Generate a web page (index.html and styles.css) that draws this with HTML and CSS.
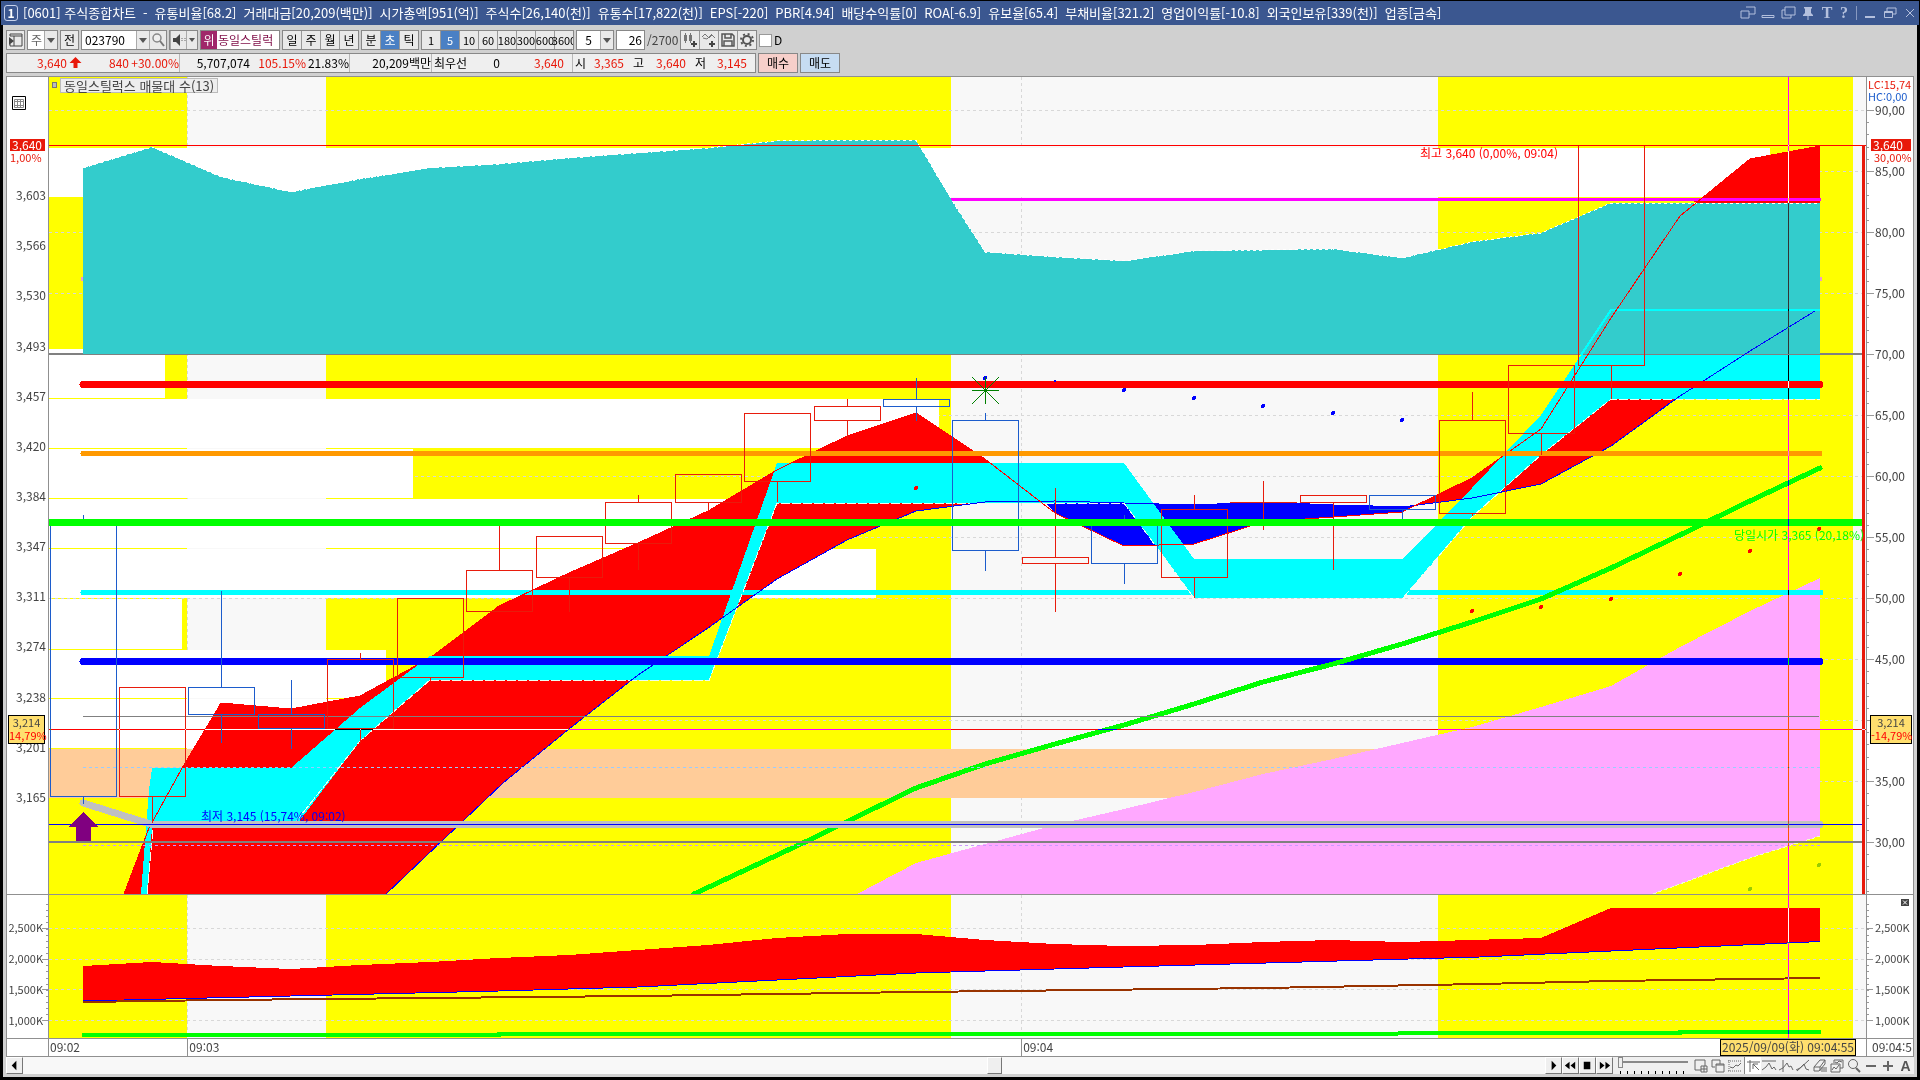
FILE: index.html
```html
<!DOCTYPE html>
<html lang="ko">
<head>
<meta charset="utf-8">
<title>[0601] 주식종합차트</title>
<link rel="stylesheet" href="styles.css">
</head>
<body>
<div class="window">
<header class="title">
  <span class="badge">1</span>
  <h1><span>[0601] 주식종합차트</span><span>-</span><span>유통비율[68.2]</span><span>거래대금[20,209(백만)]</span><span>시가총액[951(억)]</span><span>주식수[26,140(천)]</span><span>유통수[17,822(천)]</span><span>EPS[-220]</span><span>PBR[4.94]</span><span>배당수익률[0]</span><span>ROA[-6.9]</span><span>유보율[65.4]</span><span>부채비율[321.2]</span><span>영업이익률[-10.8]</span><span>외국인보유[339(천)]</span><span>업종[금속]</span></h1>
  <div class="wbtns">
    <button aria-label="창 분리"><svg viewBox="0 0 16 16"><path d="M6 2h9v7H9M1 6h8v7H1z"/></svg></button>
    <button aria-label="숨기기"><svg viewBox="0 0 16 16"><path d="M2 10.500h12v2H2z"/></svg></button>
    <button aria-label="복사"><svg viewBox="0 0 16 16"><path d="M5 2h10v8H5zM5 5H2v8h9v-3"/></svg></button>
    <button aria-label="고정"><svg viewBox="0 0 16 16"><path class="f" d="M4 2h8v1l-1 1v4l2 2v1H3v-1l2-2V4L4 3zM7.500 11h1v4h-1z"/></svg></button>
    <button class="ch">T</button>
    <button class="ch" aria-label="도움말">?</button>
    <i></i>
    <button aria-label="최소화"><svg viewBox="0 0 16 16"><path class="f" d="M3 11h10v2H3z"/></svg></button>
    <button aria-label="복원"><svg viewBox="0 0 16 16"><path d="M5 6V3h9v6h-3M2.500 6.500h8v6h-8zM3 7.500h7"/></svg></button>
    <button aria-label="닫기"><svg viewBox="0 0 16 16"><path d="M4 4l8 8M12 4l-8 8"/></svg></button>
  </div>
</header>
<main class="frame">
<div class="tools">
  <button class="tb" aria-label="목록"><svg viewBox="0 0 16 16"><path d="M2 4V2h12v12H2v-2M2 4h12M6 4v10" stroke="#444" fill="none"/><path d="M1 5l5 4-5 4z" fill="#444"/></svg></button>
  <span class="combo w31"><input value="주" aria-label="주기 유형" class="dim"><button aria-label="열기" class="dd"></button></span>
  <button class="tb">전</button>
  <span class="combo w86"><input value="023790" aria-label="종목코드" class="code"><button aria-label="열기" class="dd"></button><button class="ic" aria-label="검색"><svg viewBox="0 0 16 16"><circle cx="7" cy="6" r="4" fill="#eee" stroke="#888" stroke-width="1.500"/><path d="M10 9l4 5" stroke="#777" stroke-width="2"/></svg></button></span>
  <span class="combo w29"><button class="ic" aria-label="소리"><svg viewBox="0 0 16 16"><path d="M2 6h3l4-4v12L5 10H2z" fill="#444"/><path d="M11 6v4M14 6v4" stroke="#666" stroke-dasharray="1 1"/></svg></button><button aria-label="열기" class="dd nar"></button></span>
  <span class="combo w80"><b class="up">위</b><input value="동일스틸럭" aria-label="종목명" class="name"></span>
  <span class="seg s4"><button>일</button><button>주</button><button>월</button><button>년</button></span>
  <span class="seg s3"><button>분</button><button class="on">초</button><button>틱</button></span>
  <span class="seg s8"><button>1</button><button class="on">5</button><button>10</button><button>60</button><button>180</button><button>300</button><button>600</button><button>3600</button></span>
  <span class="combo w38"><input value="5" aria-label="주기" class="mid"><button aria-label="열기" class="dd"></button></span>
  <span class="combo w29"><input value="26" aria-label="표시 개수" class="rt"></span>
  <span class="tot">/2700</span>
  <span class="seg s4">
    <button aria-label="봉 추가"><svg viewBox="0 0 16 16"><path d="M2 3h3v6H2zM3 1h1v10H3zM7 3h3v6H7zM8 1h1v10H8z" fill="#777"/><path d="M9 12h6M12 9v6" stroke="#444" stroke-width="2"/></svg></button>
    <button aria-label="지표 추가"><svg viewBox="0 0 16 16"><path d="M1 5l3-3 4 4 3-3 3 3M2 6l4 1 5-5" stroke="#777" fill="none"/><path d="M8 12h6M11 9v6" stroke="#444" stroke-width="2"/></svg></button>
    <button aria-label="저장"><svg viewBox="0 0 16 16"><path d="M2 2h10l2 2v10H2zM5 2v4h6V2M4 14V9h8v5" stroke="#555" fill="none" stroke-width="1.500"/></svg></button>
    <button aria-label="설정"><svg viewBox="0 0 16 16"><circle cx="8" cy="8" r="4" fill="none" stroke="#555" stroke-width="2"/><circle cx="8" cy="8" r="6" fill="none" stroke="#555" stroke-width="2" stroke-dasharray="2 2.700"/></svg></button>
  </span>
  <label class="chk"><input type="checkbox">D</label>
</div>
<div class="quote">
  <div class="qbox">
    <span class="r">3,640</span><svg class="arr" viewBox="0 0 12 12"><path d="M6 0l6 6H8v5H4V6H0z"/></svg><span class="r">840</span><span class="r">+30.00%</span>
    <span class="s k">5,707,074</span><span class="r">105.15%</span><span class="k">21.83%</span>
    <span class="s k">20,209백만</span>
    <span class="s k l">최우선</span><span class="k">0</span><span class="r">3,640</span>
    <span></span><span class="s k l">시</span><span class="r">3,365</span><span class="k">고</span><span class="r">3,640</span><span class="k">저</span><span class="r">3,145</span>
  </div>
  <button class="buy">매수</button><button class="sell">매도</button>
</div>

<section class="chart">
  <div class="axis left">
    <svg class="cal" viewBox="0 0 14 14"><path d="M.5.500h13v13H.5z" fill="#fff" stroke="#000"/><path d="M2.500 3.500h9v8h-9zM2.500 5.500h9M2.500 9.500h9M5.500 3.500v8M8.500 3.500v8" fill="none" stroke="#888"/></svg>
    <ol><li>3,603</li><li>3,566</li><li>3,530</li><li>3,493</li><li>3,457</li><li>3,420</li><li>3,384</li><li>3,347</li><li>3,311</li><li>3,274</li><li>3,238</li><li>3,201</li><li>3,165</li></ol>
    <div class="now"><b>3,640</b><span>1,00%</span></div>
    <div class="cur"><span>3,214</span><em>14,79%</em></div>
  </div>
  <div class="plot">
  <svg viewBox="49 77 1817 817" preserveAspectRatio="none">
    <rect x="49" y="77" width="1817" height="817" fill="#f8f8f8"/>
    <path fill="#ff0" d="M49 77h138v817H49zM326 77h625v817H326zM1438 77h415v817h-415z"/>
    <path class="grid" d="M49 110.500H1864M49 171.500H1864M49 232.500H1864M49 293.500H1864M49 354.500H1864M49 415.500H1864M49 476.500H1864M49 537.500H1864M49 598.500H1864M49 659.500H1864M49 720.500H1864M49 781.500H1864M49 842.500H1864M187.500 77V894M1021.500 77V894"/>
    <path fill="#fff" d="M49 148H1770v49H49zM49 349H165v49H49zM49 399H939v49H49zM49 449H413v49H49zM49 499H760v49H49zM49 549H876v49H49zM49 599H182v50H49zM49 650H386v48H49zM49 699H450v49H49z"/>
    <path fill="#fc9" d="M49 749H1460v49H49z"/>
    <path fill="#ffa8ff" d="M857 894L916 863L985 844L1055 825L1124 809L1194 792L1263 774L1333 759L1402 743L1472 727L1541 707L1611 686L1680 647L1750 611L1820 578V836L1750 858L1653 894z"/>
    <path stroke="#efc" fill="none" stroke-dasharray="4 2" d="M1653 894L1750 858L1820 836"/>
    <path fill="#f00" d="M124 894L149 828L181 770L221 703L291 709L360 696L430 658L499 606L569 573L638 543L708 511L777 470L847 436L916 413L985 459L1045 502L985 502L916 511L847 540L777 579L708 628L638 675L569 729L503 783L386 894z"/>
    <path fill="#00f" d="M1045 502L1055 513L1124 546L1194 544L1263 522L1333 517L1402 512L1413 506L1333 505L1263 502L1194 505L1124 503z"/>
    <path fill="#f00" d="M1413 506L1472 478L1541 429L1611 318L1680 216L1750 159L1820 146V311L1750 351L1680 396L1611 446L1541 484L1472 498z"/>
    <path class="cy5" d="M83 592.500H1821"/>
    <path fill="#0ff" d="M141 894L149 790L152 768H291L360 708L430 656H709L777 463H1124L1194 559H1403L1472 488L1541 415L1581 355L1611 309H1820V399H1611L1541 455L1472 517L1403 598H1194L1124 503H777L709 680H430L360 741L294 828L152 828L147 894z"/>
    <path class="wd" d="M430 680.500H709L777 503H1124L1194 598M1403 598L1472 517L1541 455L1611 399H1820M430 680L360 741L294 824M147 894L153 828"/>
    <path class="blue" d="M386 894L503 783L569 729L638 675L708 628L777 579L847 540L916 511L985 502L1055 501L1124 503L1194 505L1263 502L1333 505L1402 507L1472 498L1541 484L1611 446L1680 396"/>
    <path stroke="#f0f" stroke-width="3" d="M83 199.500H1821"/>
    <path fill="#3cc" d="M83 168L152 147L221 177L291 192L360 179L430 168L499 164L569 158L638 153L708 148L777 141L847 140L916 140L951 199L985 252L1055 257L1124 261L1194 251L1263 250L1333 249L1402 258L1472 242L1541 233L1611 203H1820V354H83z"/>
    <path stroke="#f00" d="M1694 201.500H1820"/>
    <path class="wd2" d="M83 168L152 147L221 177L291 192L360 179L430 168L499 164L569 158L638 153L708 148L777 141L847 140L916 140L951 199L985 252L1055 257L1124 261L1194 251L1263 250L1333 249L1402 258L1472 242L1541 233L1611 203H1820"/>
    <path stroke="#808080" d="M49 354.500H1864"/><path stroke="#808080" stroke-width="2" d="M49 354H83M1820 354H1864"/>
    <path fill="none" stroke="#0ff" stroke-width="2" d="M1581 355L1611 310H1820"/>
    <path class="redl" d="M124 894L149 828L181 770L221 703L291 709L360 696L430 658L499 606L569 573L638 543L708 511L777 470L847 436L916 413L985 459L1055 513L1124 546L1194 544L1263 522L1333 517L1402 512L1472 478L1541 429L1611 318L1680 216L1750 159L1820 146"/>
    <path class="blue" d="M1660 410L1680 396L1750 351L1815 311"/>
    <path class="cy5" d="M1420 592.500H1821"/>
    <path class="th" stroke="#f00" stroke-width="7" d="M83 384.500H1820"/>
    <path class="th" stroke="#f90" stroke-width="5" d="M83 453.500H1820"/>
    <path class="th" stroke="#00f" stroke-width="7" d="M83 661.500H1820"/>
    <path stroke="#0ff" stroke-width="2" d="M430 657H708"/>
    <path class="th" stroke="#0f0" stroke-width="5" d="M694 894L803 843L840 825L916 788L985 764L1055 744L1124 725L1194 704L1263 682L1333 664L1402 644L1472 622L1541 599L1611 568L1680 535L1750 501L1820 468"/>
    <path stroke="#808080" d="M83 716.500H1819"/>
    <path stroke="#9cf" stroke-dasharray="3 3" d="M83 767.500H1820"/>
    <path stroke="#c9f" stroke-dasharray="3 3" d="M83 845.500H1820"/>
    <path class="th" stroke="#c0c0c0" stroke-width="7" d="M83 803L152 824.500H1820"/>
    <path stroke="#00f" d="M49 824.500H1864"/>
    <path stroke="#808080" stroke-width="2" d="M49 842H1864"/>
    <g class="cb"><path d="M50.500 522V796.500H116.500V522M83.500 515V522M83.500 797V804M188.500 687.500h66v27h-66zM221.500 591V687M221.500 715V743M258.500 714.500h66v14h-66zM291.500 680V714M291.500 729V749M883.500 399.500h66v7h-66zM916.500 378V399M916.500 407V421M952.500 420.500h66v130h-66zM985.500 413V420M985.500 551V571M1091.500 519.500h66v44h-66zM1124.500 515V519M1124.500 564V584M1369.500 495.500h66v14h-66zM1402.500 510V522"/></g>
    <g class="cr"><path d="M119.500 687.500h66v109h-66zM152.500 797V823M327.500 659.500h66v69h-66zM360.500 653V659M360.500 729V743M397.500 598.500h66v79h-66zM430.500 678V681M466.500 570.500h66v41h-66zM499.500 525V570M536.500 536.500h66v41h-66zM569.500 578V612M605.500 502.500h66v41h-66zM638.500 495V502M638.500 544V570M675.500 474.500h66v28h-66zM708.500 503V510M744.500 413.500h66v68h-66zM777.500 482V502M814.500 406.500h66v14h-66zM847.500 399V406M847.500 421V440M1022.500 557.500h66v6h-66zM1055.500 488V557M1055.500 564V612M1161.500 509.500h66v68h-66zM1194.500 495V509M1194.500 578V598M1230 502.500h67M1263.500 481V530M1300.500 495.500h66v7h-66zM1333.500 503V570M1439.500 420.500h66v93h-66zM1472.500 392V420M1472.500 514V516M1508.500 365.500h66v68h-66zM1541.500 434V455M1578.500 145.500h66v220h-66zM1611.500 366V399"/></g>
    <path stroke="#0f0" stroke-width="7" d="M49 522.500H1864"/>
    <path stroke="#f00" d="M49 145.500H1866"/>
    <path stroke="#e8190a" stroke-width="3" d="M1863.500 145V894"/>
    <g fill="#00f"><circle cx="985" cy="378" r="2"/><circle cx="1055" cy="381" r="1"/><circle cx="1124" cy="390" r="2"/><circle cx="1194" cy="398" r="2"/><circle cx="1263" cy="406" r="2"/><circle cx="1333" cy="413" r="2"/><circle cx="1402" cy="420" r="2"/></g>
    <g fill="#f00"><circle cx="916" cy="488" r="2"/><circle cx="1472" cy="611" r="2"/><circle cx="1541" cy="607" r="2"/><circle cx="1611" cy="599" r="2"/><circle cx="1680" cy="574" r="2"/><circle cx="1750" cy="551" r="2"/><circle cx="1819" cy="529" r="2"/></g>
    <g fill="#9c0"><circle cx="1819" cy="865" r="2"/><circle cx="1750" cy="889" r="2"/></g>
    <path fill="#e9c" d="M81 277h2v4h-2zM1820 277h2v4h-2z"/>
    <path stroke="#008000" d="M972 390.500H999M985.500 377V404M972 377L999 404M999 377L972 404"/>
    <path fill="#800080" d="M83.500 812L98 827H91V841H76V827H69z"/>
    <path class="cross" d="M49 729.500H1866M1788.500 77V894"/>
  </svg>
  <i class="sq"></i><h2>동일스틸럭스 매물대 수(13)</h2>
  <span class="note hi">최고 3,640 (0,00%, 09:04)</span>
  <span class="note lo">최저 3,145 (15,74%, 09:02)</span>
  <span class="note op">당일시가 3,365 (20,18%)</span>
  </div>
  <div class="axis right">
    <svg class="ticks" viewBox="0 0 46 817" preserveAspectRatio="none"><path stroke="#999" stroke-width="7" stroke-dasharray="1 60" d="M3.500 33V767"/><path stroke="#999" stroke-width="2" stroke-dasharray="1 11.200" d="M1 33V816"/></svg>
    <ol><li>90,00</li><li>85,00</li><li>80,00</li><li>75,00</li><li>70,00</li><li>65,00</li><li>60,00</li><li>55,00</li><li>50,00</li><li>45,00</li><li>40,00</li><li>35,00</li><li>30,00</li></ol>
    <p class="lc">LC:15,74<br><span>HC:0,00</span></p>
    <div class="now"><b>3,640</b><span>30,00%</span></div>
    <div class="cur"><span>3,214</span><em>-14,79%</em></div>
  </div>

  <div class="axis left vol">
    <svg class="ticks" viewBox="0 0 41 143" preserveAspectRatio="none"><path stroke="#999" d="M35 33.500h6M35 64.500h6M35 94.500h6M35 125.500h6"/><path stroke="#999" stroke-width="2" stroke-dasharray="1 5.130" d="M40 9V132"/></svg>
    <ol><li>2,500K</li><li>2,000K</li><li>1,500K</li><li>1,000K</li></ol>
  </div>
  <div class="plot vol">
  <svg viewBox="49 895 1817 143" preserveAspectRatio="none">
    <rect x="49" y="895" width="1817" height="143" fill="#f8f8f8"/>
    <path fill="#ff0" d="M49 895h138v143H49zM326 895h625v143H326zM1438 895h415v143h-415z"/>
    <path class="grid" d="M49 928.500H1864M49 959.500H1864M49 989.500H1864M49 1020.500H1864M187.500 895V1038M1021.500 895V1038"/>
    <path fill="#f00" d="M83 966L152 962L221 966L291 969L360 965L430 962L499 958L569 955L638 950L708 945L777 938L847 934L916 934L985 940L1055 944L1124 946L1194 945L1263 942L1333 940L1402 942L1472 940L1541 938L1611 908H1820V942L1611 951L1480 957L1124 967L916 973L638 987L499 991L291 996L83 1001z"/>
    <path class="blue" d="M1820 941.500L1611 951L1480 957L1124 967L916 973L638 987L499 991L291 996L83 1001"/>
    <path fill="none" stroke="#930" stroke-width="2" d="M83 1002L221 1000L430 998L638 996L916 992L1263 988L1480 984L1611 981L1820 978"/>
    <path fill="none" stroke="#0f0" stroke-width="4" d="M82 1035H499V1034H1124L1680 1033V1032H1821"/>
    <path class="cross" d="M1788.500 895V1038"/>
  </svg>
  </div>
  <div class="axis right vol">
    <svg class="ticks" viewBox="0 0 46 143" preserveAspectRatio="none"><path stroke="#999" d="M0 33.500h6M0 64.500h6M0 94.500h6M0 125.500h6"/><path stroke="#999" stroke-width="2" stroke-dasharray="1 5.130" d="M1 9V132"/></svg>
    <ol><li>2,500K</li><li>2,000K</li><li>1,500K</li><li>1,000K</li></ol>
    <button class="x" aria-label="패널 닫기"><svg viewBox="0 0 8 7"><path stroke="#fff" d="M2 1.500l4 4M6 1.500l-4 4"/></svg></button>
  </div>
  <div class="axis left time"></div>
  <div class="time"><span class="t1">09:02</span><span class="t2">09:03</span><span class="t3">09:04</span><mark>2025/09/09(화) 09:04:55</mark></div>
  <div class="axis right time tend">09:04:5</div>
</section>

<footer class="bar">
  <button class="pb" aria-label="왼쪽"><svg viewBox="0 0 16 16"><path d="M10 3v10L5 8z"/></svg></button>
  <input class="scroll" type="range" min="0" max="100" value="64" aria-label="스크롤">
  <button class="pb" aria-label="재생"><svg viewBox="0 0 16 16"><path d="M6 3v10l5-5z"/></svg></button>
  <button class="pb" aria-label="뒤로"><svg viewBox="0 0 16 16"><path d="M7 4v8L2 8zM13 4v8L8 8z"/></svg></button>
  <button class="pb" aria-label="정지"><svg viewBox="0 0 16 16"><path d="M4 4h7v8H4z"/></svg></button>
  <button class="pb" aria-label="앞으로"><svg viewBox="0 0 16 16"><path d="M3 4v8l5-4zM9 4v8l5-4z"/></svg></button>
  <input class="speed" type="range" min="0" max="100" value="0" aria-label="속도">
  <div class="ci">
    <button aria-label="추가"><svg viewBox="0 0 16 16"><path d="M8 12H2V2h10v6M8 8h6v6H8zM8 11h6M11 8v6"/></svg></button>
    <button aria-label="겹치기"><svg viewBox="0 0 16 16"><path d="M5 9H2V2h8v4M6 6h8v8H6zM6 7h8"/></svg></button>
    <button aria-label="범위"><svg viewBox="0 0 16 16"><path stroke-dasharray="1 1" d="M2 2v12M1 3h14M1 13h14"/><path d="M3 9l3 1 3-3 2 1 3-3"/></svg></button>
    <button class="act" aria-label="십자선"><svg viewBox="0 0 16 16"><path d="M2 4h13M5 2v12M8 6l6 6M8 11V6h5"/></svg></button>
    <button aria-label="수평선"><svg viewBox="0 0 16 16"><path d="M1 3h14M1 12l4-3 3-4 3 6 2-2 2 3"/></svg></button>
    <button aria-label="수직선"><svg viewBox="0 0 16 16"><path d="M5 2v12M1 12l4-2 4-5 2 4 2-1 2 4"/></svg></button>
    <button aria-label="추세선"><svg viewBox="0 0 16 16"><path d="M2 13L14 2M1 12l4-2 4-4 2 5 3 1"/></svg></button>
    <button aria-label="전체 지우기"><svg viewBox="0 0 16 16"><path d="M2 9l6-7h5l-5 7zM2 9v4h5l6-7V2M8 9v4M10 9v5M12 9v5M14 9v5"/></svg></button>
    <button aria-label="이미지"><svg viewBox="0 0 16 16"><path d="M5 5V2h9v8h-3M2 6h9v8H2zM3 12l2-3 2 2 3-4M6 4l2 1 2-2 3 1"/></svg></button>
    <button aria-label="확대"><svg viewBox="0 0 16 16"><circle cx="7" cy="6" r="4.500"/><path stroke-width="2" d="M10 10l4 4"/></svg></button>
    <button aria-label="축소"><svg viewBox="0 0 16 16"><path stroke-width="2" d="M3 8h10"/></svg></button>
    <button aria-label="늘리기"><svg viewBox="0 0 16 16"><path stroke-width="2" d="M3 8h10M8 3v10"/></svg></button>
    <button class="big">A</button>
  </div>
</footer>
</main>
</div>
</body>
</html>
```
FILE: styles.css
```css
* { box-sizing: border-box; }
body { margin: 0; background: #000; font: 12px/16px "Noto Sans CJK KR", "Noto Sans", sans-serif; color: #000; }
button, input { font: inherit; color: inherit; margin: 0; padding: 0; border: 0; border-radius: 0; background: none; min-width: 0; }
h1, h2, p, ol { margin: 0; padding: 0; font: inherit; list-style: none; }
svg { display: block; }
.window { height: 100vh; min-height: 600px; display: flex; flex-direction: column; padding: 1px 1px 3px; }

.title { flex: none; height: 24px; display: flex; align-items: center; background: #3b5790; color: #fff; padding: 0 0 0 3px; }
.badge { width: 14px; height: 16px; border: 1px solid #c8d2ec; border-radius: 3px; font-weight: 700; line-height: 14px; text-align: center; margin-right: 5px; }
.title h1 { flex: 1; display: flex; gap: 7px; font-size: 13px; line-height: 20px; white-space: nowrap; overflow: hidden; }
.wbtns { display: flex; align-items: center; gap: 3px; color: #b4c0dd; }
.wbtns button { width: 17px; height: 16px; }
.wbtns svg { width: 16px; height: 16px; fill: none; stroke: #b4c0dd; }
.wbtns .f { fill: #b4c0dd; stroke: none; }
.wbtns .ch { width: 14px; font: 700 16px/16px "Liberation Serif", serif; }
.wbtns i { width: 1px; height: 14px; margin: 0 2px; background: #8899c0; }

.frame { flex: 1; min-height: 0; display: flex; flex-direction: column; margin: 0 2px; padding: 5px 3px 3px; background: #d0d0d0; }
.tools { flex: none; display: flex; gap: 2px; height: 20px; white-space: nowrap; }
.tools svg { width: 16px; height: 16px; margin: auto; }
.tb { width: 19px; border: 1px solid #888; background: #e9e9e9; }
.combo { display: flex; border: 1px solid #888; background: #fff; }
.combo input { flex: 1; width: 0; }
.combo .dim { color: #666; padding-left: 3px; }
.combo .code { padding-left: 3px; }
.combo .name { color: #80104a; padding-left: 1px; }
.combo .mid { text-align: center; }
.combo .rt { text-align: right; padding-right: 2px; }
.w29 { width: 29px; } .w31 { width: 31px; } .w38 { width: 38px; } .w80 { width: 80px; } .w86 { width: 86px; }
.dd { width: 13px; background: #e9e9e9; border-left: 1px solid #aaa; display: grid; place-items: center; }
.dd::before { content: ""; border: 4px solid transparent; border-top: 5px solid #555; border-bottom: 0; }
.nar { width: 11px; }
.nar::before { border-left-width: 3px; border-right-width: 3px; border-top-width: 4px; }
.ic { width: 17px; background: #e9e9e9; border-left: 1px solid #aaa; }
.up { width: 16px; background: #a0286a; color: #fff; font-weight: 400; text-align: center; line-height: 18px; }
.seg { display: flex; border: 1px solid #888; background: #e9e9e9; }
.seg button { flex: 1; display: flex; justify-content: center; align-items: center; }
.seg button + button { border-left: 1px solid #999; }
.seg .on { background: #4a80c4; color: #fff; }
.s3 { width: 58px; } .s4 { width: 77px; } .s8 { width: 153px; overflow: hidden; }
.s8 button { font-size: 11px; }
.tot { color: #444; line-height: 20px; width: 31px; }
.chk { display: flex; align-items: center; gap: 2px; }
.chk input { appearance: none; width: 13px; height: 13px; background: #fff; border: 1px solid #999; }

.quote { flex: none; display: flex; gap: 2px; height: 20px; margin: 3px 0; }
.qbox { display: grid; grid-template-columns: 60px 18px 44px 50px 71px 56px 43px 82px 41px 28px 64px 8px 14px 38px 20px 42px 20px 41px; width: 750px; border: 1px solid #888; background: #efefef; line-height: 18px; text-align: right; white-space: nowrap; }
.qbox .l { text-align: left; padding-left: 2px; }
.qbox .s { border-left: 1px solid #b8b8b8; }
.r { color: #e8190a; }
.arr { width: 13px; height: 12px; margin: 3px 2px; fill: #e8190a; }
.buy, .sell { width: 40px; border: 1px solid #888; background: #f6cfca; }
.sell { background: #c6dcf2; }

.chart { flex: 1; min-height: 0; display: grid; grid-template: minmax(0, 1fr) 144px 18px / 42px minmax(0, 1fr) 47px; border: 1px solid #909090; border-bottom: 0; background: #fff; color: #444; }
.chart > * { position: relative; border-bottom: 1px solid #909090; overflow: hidden; }
.plot svg, .ticks { position: absolute; inset: 0; width: 100%; height: 100%; shape-rendering: crispEdges; }
.left { border-right: 1px solid #909090; text-align: right; }
.right { border-left: 1px solid #909090; }
.axis ol { display: flex; flex-direction: column; height: 100%; }
.axis li { flex: 1; display: flex; align-items: center; }
.left ol { padding: 93px 0 72px; }
.left li { justify-content: flex-end; padding-right: 2px; }
.right ol { padding: 2px 0 22px 8px; }
.left.vol ol { padding: 16px 5px 3px 0; }
.right.vol ol { padding: 16px 0 3px 8px; }
.vol ol { font-size: 11px; }
.left.vol li { padding: 0; }
.cal { position: absolute; left: 5px; top: 19px; width: 14px; height: 14px; }
.now, .cur, .lc { position: absolute; line-height: 12px; }
.now { top: 62px; left: 3px; width: 35px; text-align: left; color: #e8190a; }
.now b { display: block; padding: 0 2px; background: #e8190a; color: #fff; font-weight: 400; }
.now span { display: block; font-size: 11px; }
.right .now { left: 4px; width: 40px; }
.right .now span { padding-left: 3px; }
.cur { top: 638px; left: 1px; width: 37px; height: 29px; border: 1px solid #000; background: #ffdf6e; text-align: center; font-size: 11px; line-height: 13px; white-space: nowrap; }
.cur span, .cur em { display: block; font-style: normal; }
.cur em { color: #f00; }
.right .cur { left: 3px; width: 42px; }
.lc { top: 1px; left: 1px; color: #e8190a; font-size: 11px; white-space: nowrap; }
.lc span { color: #1c5ccc; }
.sq { position: absolute; left: 3px; top: 5px; width: 5px; height: 6px; border: 1px solid #777; background: #bbb; }
.plot h2 { position: absolute; left: 11px; top: 1px; border: 1px solid #bbb; background: #eee; padding: 0 3px; font-size: 13px; line-height: 13px; white-space: nowrap; }
.note { position: absolute; white-space: nowrap; }
.hi { right: 308px; top: 68px; color: #f00; }
.lo { left: 152px; top: 731px; color: #00f; }
.op { right: 2px; top: 450px; color: #0f0; }
.x { position: absolute; right: 4px; top: 4px; width: 8px; height: 7px; background: #444; }
.time { line-height: 15px; }
.time span { position: absolute; left: 0; top: 0; height: 100%; padding-left: 1px; }
.time .t2 { left: 8%; margin-left: -7px; border-left: 1px solid #909090; }
.time .t3 { left: 54%; margin-left: -9px; border-left: 1px solid #909090; }
.time mark { position: absolute; right: 10px; top: 0; height: 17px; border: 1px solid #000; background: #ffdf6e; color: #444; padding: 0 1px; line-height: 14px; white-space: nowrap; }
.tend { padding-left: 5px; white-space: nowrap; }

.grid { stroke: #d8d8d8; stroke-dasharray: 3 3; fill: none; }
.blue { stroke: #00f; fill: none; }
.redl { stroke: #f00; fill: none; }
.cy5 { stroke: #0ff; stroke-width: 5; stroke-linecap: round; }
.wd { stroke: #efe; fill: none; stroke-dasharray: 9 2; }
.wd2 { stroke: #fff; fill: none; stroke-dasharray: 3 3; }
.th { fill: none; stroke-linecap: round; }
.cb { stroke: #1c5ccc; fill: none; }
.cr { stroke: #e81c0c; fill: none; }
.cross { stroke: #0ff; mix-blend-mode: difference; }

.bar { flex: none; display: flex; height: 17px; background: #efefef; }
.pb { width: 17px; border: 1px solid; border-color: #fff #777 #777 #fff; background: #efefef; }
.pb svg { width: 15px; height: 15px; }
.scroll, .speed { appearance: none; }
.scroll { flex: 1; background: #f8f8f8; }
.scroll::-webkit-slider-thumb { appearance: none; width: 15px; height: 17px; border: 1px solid; border-color: #fff #777 #777 #fff; background: #efefef; }
.speed { width: 70px; margin: 0 5px; background: linear-gradient(#888, #888) 0 4px / 100% 2px no-repeat, repeating-linear-gradient(90deg, #000 0 1px, transparent 1px 7px) 2px 14px / 100% 3px no-repeat; }
.speed::-webkit-slider-thumb { appearance: none; width: 5px; height: 11px; margin-bottom: 6px; border: 1px solid #888; background: #eee; }
.ci { display: flex; }
.ci button { width: 17px; }
.ci svg { width: 16px; height: 16px; fill: none; stroke: #666; }
.ci .act { background: #fff; border-left: 1px solid #888; }
.ci .big { font: 700 14px/16px "Liberation Sans", sans-serif; color: #555; }
```
